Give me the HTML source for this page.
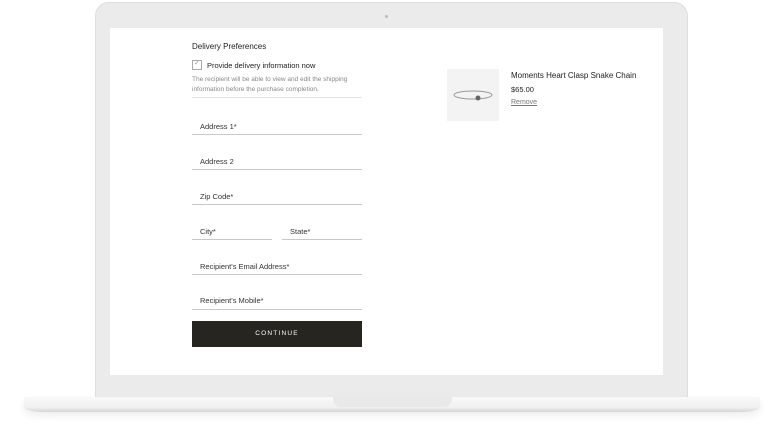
<!DOCTYPE html><html><head><style>
body{margin:0;width:772px;height:435px;background:#fff;position:relative;overflow:hidden;font-family:"Liberation Sans",sans-serif;color:#222}
.a{position:absolute}
.lbl{position:absolute;font-size:7.5px;color:#333}
.ln{position:absolute;height:1px;background:#c8c8c8}
</style></head><body>
<div class="a" style="left:95px;top:2px;width:593px;height:400px;background:#ebebeb;border-radius:14px 14px 0 0;border:1px solid #dedede;box-sizing:border-box"></div>
<div class="a" style="left:385px;top:15px;width:3px;height:3px;border-radius:50%;background:#bbb"></div>
<div class="a" style="left:110px;top:28px;width:553px;height:347px;background:#fff"></div>
<div class="a" style="left:24px;top:397px;width:736px;height:15px;background:linear-gradient(#f9f9f9,#f0f0f0 70%,#d4d4d4);border-radius:0 0 20px 20px/0 0 5px 5px;box-shadow:0 4px 8px rgba(0,0,0,0.07)"></div>
<div class="a" style="left:333px;top:397px;width:119px;height:10px;background:#e9e9e9;border-radius:0 0 8px 8px"></div>
<div class="a" style="left:192px;top:42px;font-size:8px;color:#222">Delivery Preferences</div>
<div class="a" style="left:192px;top:60px;width:8px;height:8px;border:1px solid #aaa"></div>
<div class="a" style="left:194px;top:59px;font-size:7px;color:#999">✓</div>
<div class="a" style="left:207px;top:61px;font-size:7.5px;color:#222">Provide delivery information now</div>
<div class="a" style="left:192px;top:75px;font-size:6.5px;color:#888;line-height:10px">The recipient will be able to view and edit the shipping<br>information before the purchase completion.</div>
<div class="ln" style="left:192px;top:97px;width:170px;background:#e4e4e4"></div>
<div class="lbl" style="left:200px;top:122px">Address 1*</div><div class="ln" style="left:192px;top:134px;width:170px"></div>
<div class="lbl" style="left:200px;top:157px">Address 2</div><div class="ln" style="left:192px;top:169px;width:170px"></div>
<div class="lbl" style="left:200px;top:192px">Zip Code*</div><div class="ln" style="left:192px;top:204px;width:170px"></div>
<div class="lbl" style="left:200px;top:227px">City*</div><div class="ln" style="left:192px;top:239px;width:80px"></div>
<div class="lbl" style="left:290px;top:227px">State*</div><div class="ln" style="left:282px;top:239px;width:80px"></div>
<div class="lbl" style="left:200px;top:262px">Recipient's Email Address*</div><div class="ln" style="left:192px;top:274px;width:170px"></div>
<div class="lbl" style="left:200px;top:296px">Recipient's Mobile*</div><div class="ln" style="left:192px;top:309px;width:170px"></div>
<div class="a" style="left:192px;top:321px;width:170px;height:26px;background:#27251f;color:#fff;font-size:6.5px;letter-spacing:1.2px;text-align:center;line-height:26px">CONTINUE</div>
<div class="a" style="left:447px;top:69px;width:52px;height:52px;background:#f3f3f3"></div>
<svg class="a" style="left:447px;top:69px" width="52" height="52"><ellipse cx="26" cy="26" rx="19" ry="4" fill="none" stroke="#999" stroke-width="1"/><circle cx="31" cy="29" r="2.5" fill="#666"/></svg>
<div class="a" style="left:511px;top:71px;font-size:8px;color:#222">Moments Heart Clasp Snake Chain</div>
<div class="a" style="left:511px;top:85px;font-size:7.5px;color:#222">$65.00</div>
<div class="a" style="left:511px;top:99px;font-size:7px;color:#777;text-decoration:underline">Remove</div>
</body></html>
